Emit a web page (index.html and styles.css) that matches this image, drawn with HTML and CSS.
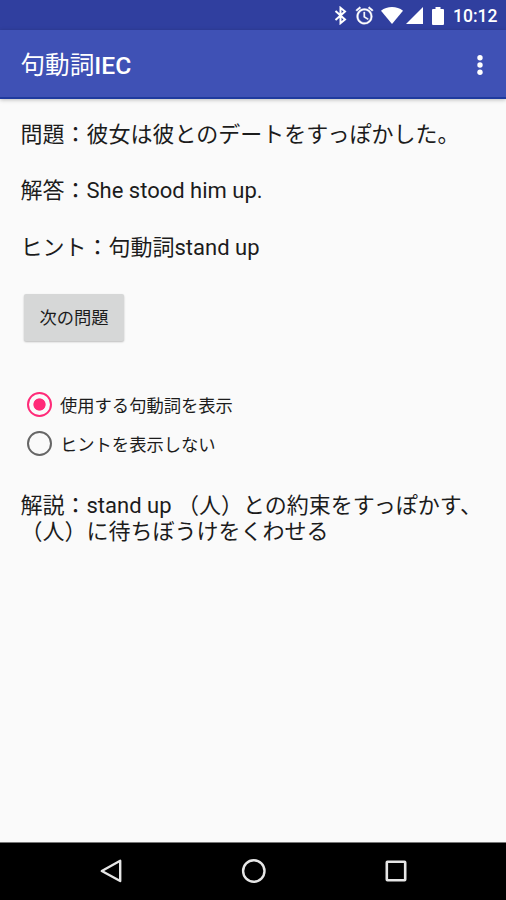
FILE: index.html
```
<!DOCTYPE html>
<html lang="ja">
<head>
  <meta charset="UTF-8">
  <meta name="viewport" content="width=device-width, initial-scale=1.0">
  <title>句動詞IEC</title>
  <link rel="stylesheet" href="styles.css">
</head>
<body>

  <div class="statusbar">
    <svg class="bluetooth" width="13" height="19" viewBox="0 0 13 19">
      <path d="M1.5 5 L11 13.5 L6.5 17.2 V1.8 L11 5.5 L1.5 14" fill="none" stroke="#fff" stroke-width="2"/>
    </svg>
    <svg class="alarm" width="21" height="21" viewBox="0 0 24 24">
      <path fill="#fff" stroke="#fff" stroke-width="0.4" d="M22 5.72l-4.6-3.86-1.29 1.53 4.6 3.86L22 5.72zM7.88 3.39L6.6 1.86 2 5.71l1.29 1.53 4.59-3.85zM12.5 8H11v6l4.75 2.85.75-1.23-4-2.37V8zM12 4c-4.97 0-9 4.03-9 9s4.02 9 9 9a9 9 0 0 0 0-18zm0 16c-3.87 0-7-3.13-7-7s3.13-7 7-7 7 3.13 7 7-3.13 7-7 7z"/>
    </svg>
    <svg class="wifi" width="22" height="17" viewBox="0 0 22 17">
      <path fill="#fff" d="M11 17 L0 3.8 C6 -1.2 16 -1.2 22 3.8 Z"/>
    </svg>
    <svg class="signal" width="17" height="17" viewBox="0 0 17 17">
      <path fill="#fff" d="M17 0 V17 H0 Z"/>
    </svg>
    <svg class="battery" width="12" height="18" viewBox="0 0 12 18">
      <path fill="#fff" d="M3.5 0 H8.5 V2 H11 Q12 2 12 3 V17 Q12 18 11 18 H1 Q0 18 0 17 V3 Q0 2 1 2 H3.5 Z"/>
    </svg>
    <span class="clock">10:12</span>
  </div>

  <header class="toolbar">
    <h1 class="title">句動詞<span class="latin">IEC</span></h1>
    <svg class="more" width="6" height="21" viewBox="0 0 6 21">
      <circle cx="3" cy="2.7" r="2.7" fill="#fff"/>
      <circle cx="3" cy="10" r="2.7" fill="#fff"/>
      <circle cx="3" cy="17.3" r="2.7" fill="#fff"/>
    </svg>
  </header>

  <main class="content">
    <p class="text">問題：彼女は彼とのデートをすっぽかした。</p>
    <p class="text">解答：She stood him up.</p>
    <p class="text">ヒント：句動詞stand up</p>

    <button class="next" type="button">次の問題</button>

    <div class="options">
      <label class="option"><input type="radio" name="mode" checked>使用する句動詞を表示</label>
      <label class="option"><input type="radio" name="mode">ヒントを表示しない</label>
    </div>

    <p class="text">解説：stand up （人）との約束をすっぽかす、<br>（人）に待ちぼうけをくわせる</p>
  </main>

  <nav class="navbar">
    <svg width="26" height="26" viewBox="0 0 26 26">
      <path d="M21.2 2.8 V23 L2.8 13 Z" fill="none" stroke="#e6e6e6" stroke-width="2.4" stroke-linejoin="round"/>
    </svg>
    <svg width="26" height="26" viewBox="0 0 26 26">
      <circle cx="12.8" cy="13" r="10.7" fill="none" stroke="#e6e6e6" stroke-width="2.4"/>
    </svg>
    <svg width="26" height="26" viewBox="0 0 26 26">
      <rect x="3.8" y="3.8" width="18.4" height="18.4" rx="0.6" fill="none" stroke="#e6e6e6" stroke-width="2.6"/>
    </svg>
  </nav>

</body>
</html>
```
FILE: styles.css
```
body {
  display: flex;
  flex-direction: column;
  height: 900px;
  margin: 0;
  background-color: #fafafa;
  color: #1c1c1c;
  font-family: Roboto, "Noto Sans CJK JP", sans-serif;
  text-spacing-trim: space-all;
}

/* Status bar */
.statusbar {
  display: flex;
  justify-content: flex-end;
  align-items: center;
  box-sizing: border-box;
  height: 30px;
  padding: 1px 9px 0 0;
  background-color: #303f9f;
}

.alarm {
  margin-left: 7px;
}

.wifi {
  margin-left: 6px;
}

.signal {
  margin-left: 3px;
}

.battery {
  margin-left: 9px;
}

.clock {
  width: 44px;
  margin-left: 9px;
  padding-top: 2px;
  color: #fff;
  font-size: 17.5px;
  font-weight: 500;
  line-height: 27px;
  white-space: nowrap;
}

/* App bar */
.toolbar {
  display: flex;
  justify-content: space-between;
  align-items: center;
  box-sizing: border-box;
  height: 69px;
  padding: 3px 23px 0 20.5px;
  border-bottom: 2px solid #1f3a9e;
  background-color: #3f51b5;
  box-shadow: 0 1px 4px rgba(0, 0, 0, 0.25);
}

.title {
  margin: 0;
  padding-top: 2px;
  color: #fff;
  font-size: 24.6px;
  font-weight: 400;
  line-height: 34px;
}

.latin {
  font-weight: 500;
}

/* Content */
.content {
  flex: 1;
  padding: 23px 0 0 20.5px;
}

.text {
  margin: 0 0 30.4px;
  font-size: 22px;
  line-height: 26px;
  white-space: nowrap;
}

.next {
  display: block;
  width: 100px;
  height: 47px;
  margin: 33px 0 0 3.5px;
  padding: 0 0 2px;
  border: 0;
  border-radius: 2px;
  background-color: #d6d7d7;
  box-shadow: 0 1px 2px rgba(0, 0, 0, 0.25);
  color: #1c1c1c;
  font-family: inherit;
  font-size: 17.3px;
}

.options {
  margin: 44px 0 30px 6.5px;
}

.option {
  display: flex;
  align-items: center;
  height: 39px;
  font-size: 17.3px;
}

.option input {
  appearance: none;
  box-sizing: border-box;
  width: 25px;
  height: 25px;
  margin: 0 8px 0 0;
  border: 2px solid #666;
  border-radius: 50%;
}

.option input:checked {
  border-color: #ff2a78;
  background: radial-gradient(circle, #ff2a78 5.7px, transparent 6.5px);
}

/* Navigation bar */
.navbar {
  display: flex;
  justify-content: center;
  align-items: center;
  gap: 116px;
  box-sizing: border-box;
  height: 58px;
  padding: 0 0 2px 1px;
  border-top: 1px solid #777;
  background-color: #000;
}
```
